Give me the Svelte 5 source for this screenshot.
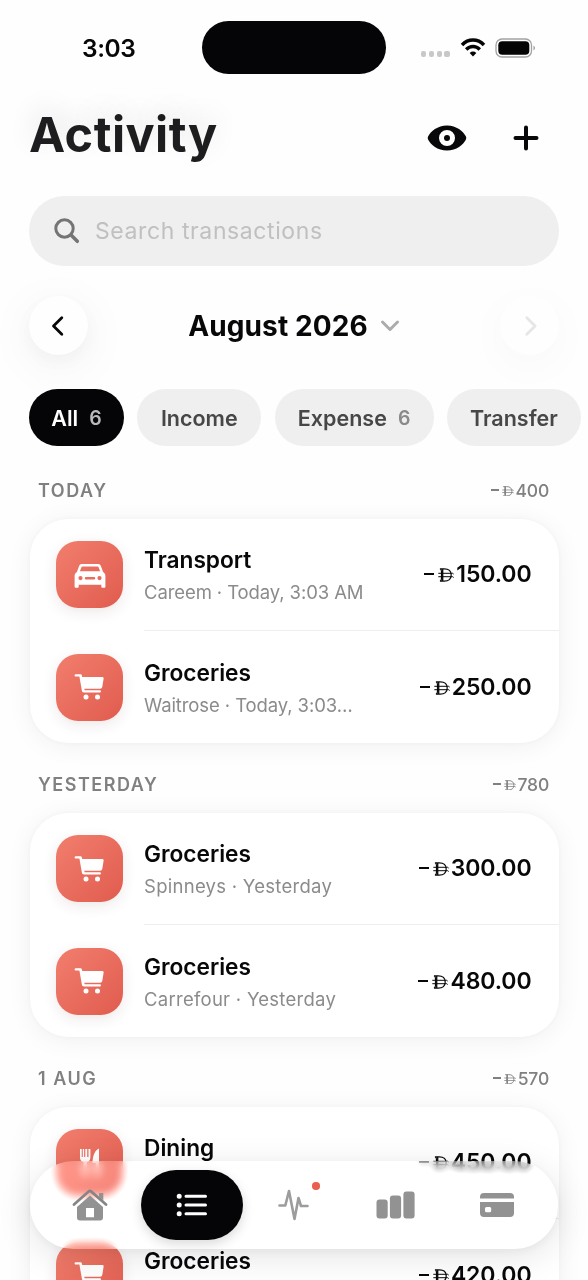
<script>
  let active = $state('All');
  let tab = $state('list');

  const filters = [
    { label: 'All', count: 6, cls: 'all' },
    { label: 'Income', cls: 'income' },
    { label: 'Expense', count: 6, cls: 'expense' },
    { label: 'Transfer', cls: 'transfer' },
  ];

  const groups = [
    {
      label: 'TODAY',
      total: '400',
      rows: [
        { icon: 'car', title: 'Transport', sub: 'Careem · Today, 3:03 AM', amount: '150.00' },
        { icon: 'cart', title: 'Groceries', sub: 'Waitrose · Today, 3:03…', amount: '250.00' },
      ],
    },
    {
      label: 'YESTERDAY',
      total: '780',
      rows: [
        { icon: 'cart', title: 'Groceries', sub: 'Spinneys · Yesterday', amount: '300.00' },
        { icon: 'cart', title: 'Groceries', sub: 'Carrefour · Yesterday', amount: '480.00' },
      ],
    },
    {
      label: '1 AUG',
      total: '570',
      rows: [
        { icon: 'fork', title: 'Dining', sub: '', amount: '450.00' },
        { icon: 'cart', title: 'Groceries', sub: '', amount: '420.00' },
      ],
    },
  ];

  const tabs = ['home', 'list', 'pulse', 'bars', 'card'];
</script>

{#snippet dirham()}
  <svg class="dirham" viewBox="0 0 16 14" fill="none" stroke="currentColor">
    <path d="M2 .8h4.200C10.800.8 13.200 3 13.200 7s-2.400 6.200-7 6.200H2c1.200-.5 1.500-1.300 1.500-2.700v-7C3.500 2.100 3.200 1.300 2 .8z" stroke-width="1.200" />
    <path d="M4.700 1v12" stroke-width="1.300" />
    <path d="M.3 5.300h14.400l1 .8M.3 8.700h14.400l1 .8" stroke-width="1" />
  </svg>
{/snippet}

{#snippet category(name)}
  <svg viewBox="0 0 32 32" fill="#fff">
    {#if name === 'car'}
      <path fill-rule="evenodd" d="M7.800 5h16.400c1.300 0 2.300.8 2.700 2l2.200 6c1.500.9 2.300 2.300 2.300 4.200v10.300c0 .8-.5 1.300-1.200 1.300h-1.600c-.8 0-1.300-.5-1.300-1.300V25.800H4.700v1.700c0 .8-.5 1.300-1.300 1.300H1.800c-.7 0-1.200-.5-1.200-1.300V17.200c0-1.900.8-3.300 2.300-4.200l2.200-6c.4-1.200 1.400-2 2.700-2zm.8 2.400c-.6 0-1 .3-1.200.8l-1.500 4.100h20.200l-1.500-4.100c-.2-.5-.6-.8-1.200-.8zM6.500 17a2.100 2.100 0 1 0 0 4.200 2.100 2.100 0 0 0 0-4.200zm19 0a2.100 2.100 0 1 0 0 4.200 2.100 2.100 0 0 0 0-4.200zM12 17.900a1.250 1.250 0 0 0 0 2.500h8a1.250 1.250 0 0 0 0-2.500z" />
    {:else if name === 'cart'}
      <path d="M1.800 3.200h4.400c1 0 1.500.5 1.700 1.400l.3 1.400h20c1 0 1.600.7 1.400 1.700l-1.300 8.100c-.2 1.300-1 1.900-2.200 1.900H10.300l.3 1.500h15.200c1.600 0 1.600 2.300 0 2.300H10c-1.200 0-1.900-.6-2.100-1.700L5.400 5.600H1.800c-1.600 0-1.600-2.400 0-2.400z" />
      <circle cx="12" cy="26" r="2.500" />
      <circle cx="23.500" cy="26" r="2.500" />
    {:else}
      <path d="M6 2v8.500c0 2.500 1.200 4 3.500 4.700V29h3.400V15.200c2.300-.7 3.500-2.200 3.500-4.700V2h-1.900v8h-1.300V2h-1.900v8h-1.200V2H8.800v8H7.700V2zM25 1.500c-3.600 1.500-6.200 6-6.600 14.500H21.700V29H25z" />
    {/if}
  </svg>
{/snippet}

<div class="screen">
  <div class="status">
    <span class="time">3:03</span>
    <div class="island"></div>
    <div class="signals">
      <div class="dots"><i></i><i></i><i></i><i></i></div>
      <svg class="wifi" width="26" height="20" viewBox="0 0 26 20" fill="none" stroke="#050506">
        <path d="M2 6.900C8.300.5 17.700.5 24 6.900" stroke-width="3.500" />
        <path d="M6.200 11.500c3.900-4 9.700-4 13.600 0" stroke-width="3.400" />
        <path d="M9.700 14.900c1.900-1.800 4.700-1.800 6.600 0L13 18.500z" fill="#050506" stroke="none" />
      </svg>
      <svg class="battery" width="41" height="20" viewBox="0 0 41 20">
        <rect x="1" y="1" width="35.500" height="18" rx="6" fill="none" stroke="#a2a2a2" stroke-width="1.300" />
        <rect x="3.300" y="3.300" width="31" height="13.400" rx="4" fill="#050506" />
        <path d="M38.500 7.500q3 2.500 0 5z" fill="#999" />
      </svg>
    </div>
  </div>

  <header>
    <h1>Activity</h1>
    <button class="eye" aria-label="Hide amounts">
      <svg width="40" height="26" viewBox="0 0 40 26">
        <path fill-rule="evenodd" d="M20 .5c9.500 0 16.400 6 18.800 10.800.6 1.200.6 2.200 0 3.400C36.400 19.500 29.500 25.500 20 25.500S3.600 19.500 1.200 14.700c-.6-1.200-.6-2.200 0-3.400C3.600 6.500 10.500.5 20 .5zm0 4.500a8 8 0 1 0 0 16 8 8 0 0 0 0-16z" fill="#08080a" />
        <circle cx="20" cy="13" r="3" fill="#08080a" />
      </svg>
    </button>
    <button class="plus" aria-label="Add">
      <svg width="26" height="26" viewBox="0 0 26 26" stroke="#08080a" stroke-width="4" stroke-linecap="round"><path d="M13 2.500v21M2.500 13h21" /></svg>
    </button>
  </header>

  <div class="search">
    <svg width="26" height="26" viewBox="0 0 26 26" fill="none" stroke="#747474" stroke-width="3" stroke-linecap="round">
      <circle cx="10.500" cy="10.500" r="8.700" />
      <path d="M17.300 17.300l6 6" stroke-width="3.500" />
    </svg>
    <span>Search transactions</span>
  </div>

  <div class="month">
    <button class="round" aria-label="Previous month">
      <svg width="16" height="22" viewBox="0 0 16 22"><path d="M10.800 2.800L2.500 11l8.300 8.200" /></svg>
    </button>
    <div class="current">
      <span>August 2026</span>
      <svg width="20" height="14" viewBox="0 0 20 14"><path d="M2.500 3l7.500 7.500L17.500 3" /></svg>
    </div>
    <button class="round next" aria-label="Next month" disabled>
      <svg width="16" height="22" viewBox="0 0 16 22"><path d="M4.800 2.800l8.300 8.200-8.300 8.200" /></svg>
    </button>
  </div>

  <div class="filters">
    {#each filters as f}
      <button class="chip {f.cls}" class:active={active === f.label} onclick={() => (active = f.label)}>
        <span>{f.label}</span>
        {#if f.count}<b>{f.count}</b>{/if}
      </button>
    {/each}
  </div>

  {#each groups as g}
    <section>
      <div class="head">
        <h2>{g.label}</h2>
        <span class="total"><i class="minus"></i>{@render dirham()}{g.total}</span>
      </div>
      <div class="list">
        {#each g.rows as r}
          <div class="row">
            <div class="icon">{@render category(r.icon)}</div>
            <div class="body">
              <div class="text">
                <strong>{r.title}</strong>
                <small class:timed={r.sub.includes('3:03')}>{r.sub}</small>
              </div>
              <span class="amount"><i class="minus"></i>{@render dirham()}{r.amount}</span>
            </div>
          </div>
        {/each}
      </div>
    </section>
  {/each}

  <nav>
    {#each tabs as t}
      <button class:on={tab === t} onclick={() => (tab = t)} aria-label={t}>
        {#if t === 'home'}
          <svg width="36" height="32" viewBox="0 0 36 32" fill="#929292">
            <path d="M2 15.500L16.600 2.600q1.400-1.200 2.800 0L34 15.500" fill="none" stroke="#858585" stroke-width="2.700" stroke-linecap="round" />
            <path d="M27 4h4.300v7.500L27 7.700z" />
            <path fill-rule="evenodd" d="M18 6.500L31 18v10.500q0 3-3 3H8q-3 0-3-3V18zM14 19v9.300h8V19z" />
          </svg>
        {:else if t === 'list'}
          <svg width="32" height="24" viewBox="0 0 32 24" stroke="#fff" stroke-width="3" stroke-linecap="round">
            <path d="M10 3.200h19.500M10 12h19.500M10 20.800h19.500" />
            <path d="M3.200 3.200h.01M3.200 12h.01M3.200 20.800h.01" stroke-width="5" />
          </svg>
        {:else if t === 'pulse'}
          <svg width="32" height="34" viewBox="0 0 32 34" fill="none" stroke="#9c9c9c" stroke-width="2.600" stroke-linecap="round" stroke-linejoin="round">
            <path d="M2.500 17.500h5.800L12 3l5.500 28 4-21 2.500 8h6.500" />
          </svg>
          <i class="dot"></i>
        {:else if t === 'bars'}
          <svg width="39" height="28" viewBox="0 0 39 28" fill="#929292">
            <rect x=".5" y="8.500" width="11.200" height="19" rx="3" />
            <rect x="13.900" y="4.500" width="11.200" height="23" rx="3" />
            <rect x="27.400" y=".5" width="11.200" height="27" rx="3" />
          </svg>
        {:else}
          <svg width="36" height="26" viewBox="0 0 36 26" fill="#929292">
            <path d="M1 6.500V5q0-4 4-4h26q4 0 4 4v1.500z" />
            <path fill-rule="evenodd" d="M1 10h34v11q0 4-4 4H5q-4 0-4-4zM7.500 15Q6 15 6 16.500v2.200Q6 20.200 7.500 20.200h3.200q1.500 0 1.500-1.500v-2.200Q12.200 15 10.700 15z" />
          </svg>
        {/if}
      </button>
    {/each}
  </nav>
</div>

<style>
  :global(body) {
    background: #fefefe;
  }
  .screen {
    position: relative;
    width: 588px;
    height: 1280px;
    overflow: hidden;
    font-family: Inter, 'Liberation Sans', sans-serif;
    color: #08080a;
    background: #fefefe;
    box-sizing: border-box;
    padding: 21px 29px 0;
  }
  button {
    font: inherit;
    color: inherit;
    border: 0;
    padding: 0;
    background: none;
    display: flex;
    align-items: center;
    justify-content: center;
  }
  svg {
    display: block;
    flex: none;
  }
  .status {
    height: 53px;
    display: grid;
    grid-template-columns: 173px 184px 1fr;
    align-items: center;
  }
  .time {
    font-size: 24.5px;
    font-weight: 600;
    letter-spacing: -0.4px;
    padding-left: 53px;
  }
  .island {
    height: 53px;
    border-radius: 27px;
    background: #050507;
  }
  .signals {
    display: flex;
    align-items: center;
    padding-left: 35px;
  }
  .dots {
    display: flex;
    gap: 2.5px;
    padding-top: 13px;
  }
  .dots i {
    width: 5.3px;
    height: 5.3px;
    border-radius: 2px;
    background: #c8c8c8;
  }
  .wifi {
    margin-left: 10px;
  }
  .battery {
    margin-left: 9px;
  }
  header {
    height: 122px;
    display: flex;
    align-items: center;
    padding-top: 6px;
    box-sizing: border-box;
  }
  h1 {
    margin: -6px 0 0;
    flex: 1;
    font-size: 48.5px;
    line-height: 60px;
    letter-spacing: 0.5px;
    font-weight: 700;
    color: #1d1d1f;
    text-shadow: 0 -10px 28px rgba(0, 0, 0, 0.1);
  }
  .plus {
    margin: 0 20px 0 46px;
  }
  .search {
    height: 70px;
    border-radius: 35px;
    background: #efefef;
    display: flex;
    align-items: center;
    gap: 15px;
    padding-left: 25px;
    font-size: 23px;
    letter-spacing: 0.6px;
    color: #c0c0c0;
  }
  .month {
    display: flex;
    align-items: center;
    justify-content: space-between;
    margin-top: 30px;
  }
  .round {
    width: 59px;
    height: 59px;
    border-radius: 50%;
    background: #fefefe;
    box-shadow: 0 10px 50px rgba(0, 0, 0, 0.06), 0 6px 18px rgba(0, 0, 0, 0.03);
  }
  .round svg {
    fill: none;
    stroke: #08080a;
    stroke-width: 2.8;
    stroke-linecap: round;
    stroke-linejoin: round;
  }
  .next {
    box-shadow: 0 10px 45px rgba(0, 0, 0, 0.03);
  }
  .next svg {
    stroke: #e6e6e6;
  }
  .current {
    display: flex;
    align-items: center;
    gap: 12px;
    font-size: 28px;
    font-weight: 700;
    letter-spacing: 0.1px;
  }
  .current svg {
    fill: none;
    stroke: #acacac;
    stroke-width: 3;
    stroke-linecap: round;
    stroke-linejoin: round;
  }
  .filters {
    display: flex;
    gap: 13.3px;
    margin: 34px -29px 0 0;
  }
  .chip {
    height: 57px;
    flex: none;
    border-radius: 29px;
    background: #efefef;
    color: #474747;
    font-size: 21.5px;
    font-weight: 600;
    gap: 11px;
  }
  .chip b {
    font-size: 19.5px;
    font-weight: 600;
    color: #8a8a8a;
  }
  .chip.active {
    background: #050507;
    color: #fff;
  }
  .active b {
    color: #bababa;
  }
  .all {
    width: 95px;
  }
  .income {
    width: 124px;
  }
  .expense {
    width: 159px;
  }
  .transfer {
    width: 134px;
  }
  .head {
    height: 70px;
    padding: 12px 10px 0 9px;
    box-sizing: border-box;
    display: flex;
    justify-content: space-between;
    align-items: center;
    color: #808080;
  }
  section:first-of-type .head {
    height: 73px;
    padding-top: 15px;
  }
  h2 {
    margin: 0;
    font-size: 18px;
    font-weight: 600;
    letter-spacing: 1.5px;
  }
  .total,
  .amount {
    display: flex;
    align-items: center;
  }
  .total {
    font-size: 17.5px;
    font-weight: 500;
    letter-spacing: -0.2px;
  }
  .minus {
    width: 8px;
    height: 2px;
    margin-right: 3px;
    background: currentColor;
  }
  .dirham {
    width: 12px;
    height: 10.5px;
    margin-right: 2px;
    position: relative;
    top: 1px;
  }
  .list {
    border-radius: 38px;
    background: #fff;
    margin-left: 1px;
    box-shadow: 0 0 5px rgba(0, 0, 0, 0.03), 0 3px 26px rgba(0, 0, 0, 0.06);
  }
  .row {
    height: 112px;
    display: flex;
    align-items: center;
    padding-left: 26px;
  }
  .icon {
    width: 67px;
    height: 67px;
    margin: 0 21px 1px 0;
    flex: none;
    border-radius: 22px;
    display: grid;
    place-items: center;
    background: linear-gradient(135deg, #f27e6d, #e05c4f);
    box-shadow: 0 4px 14px rgba(90, 30, 30, 0.1);
  }
  .icon svg {
    width: 32px;
    height: 32px;
  }
  .row:last-child .icon {
    margin-bottom: 0;
  }
  .body {
    flex: 1;
    height: 112px;
    box-sizing: border-box;
    display: flex;
    align-items: center;
    justify-content: space-between;
    padding-right: 27.500px;
  }
  .row:first-child .body {
    border-bottom: 1.500px solid #eee;
  }
  .text {
    display: flex;
    flex-direction: column;
    gap: 2px;
    padding-top: 3px;
  }
  strong {
    font-size: 22.7px;
    line-height: 30px;
    font-weight: 600;
  }
  small {
    min-height: 30px;
    font-size: 18.5px;
    line-height: 30px;
    letter-spacing: 0.27px;
    color: #8b8b8b;
  }
  small.timed {
    letter-spacing: -0.1px;
  }
  .amount {
    font-size: 23px;
    font-weight: 600;
    letter-spacing: -0.1px;
  }
  .row:first-child .amount {
    padding-bottom: 1px;
  }
  .amount .minus {
    width: 10px;
    height: 2.600px;
    margin-right: 4px;
  }
  .amount .dirham {
    width: 16px;
    height: 14px;
  }
  nav {
    position: absolute;
    left: 30px;
    top: 1161px;
    width: 528px;
    height: 88px;
    box-sizing: border-box;
    padding: 9px 10px 9px 9px;
    border-radius: 44px;
    display: flex;
    background: rgba(255, 255, 255, 0.2);
    backdrop-filter: blur(4px) brightness(1.08);
    box-shadow: 0 8px 36px rgba(0, 0, 0, 0.11), 0 2px 12px rgba(0, 0, 0, 0.05);
  }
  nav button {
    flex: 1;
    height: 70px;
    border-radius: 35px;
    position: relative;
  }
  nav .on {
    background: #050507;
    box-shadow: 0 4px 12px rgba(0, 0, 0, 0.15);
  }
  .dot {
    position: absolute;
    width: 7.500px;
    height: 7.500px;
    left: 69.500px;
    top: 12px;
    border-radius: 50%;
    background: #e95f50;
  }
</style>
